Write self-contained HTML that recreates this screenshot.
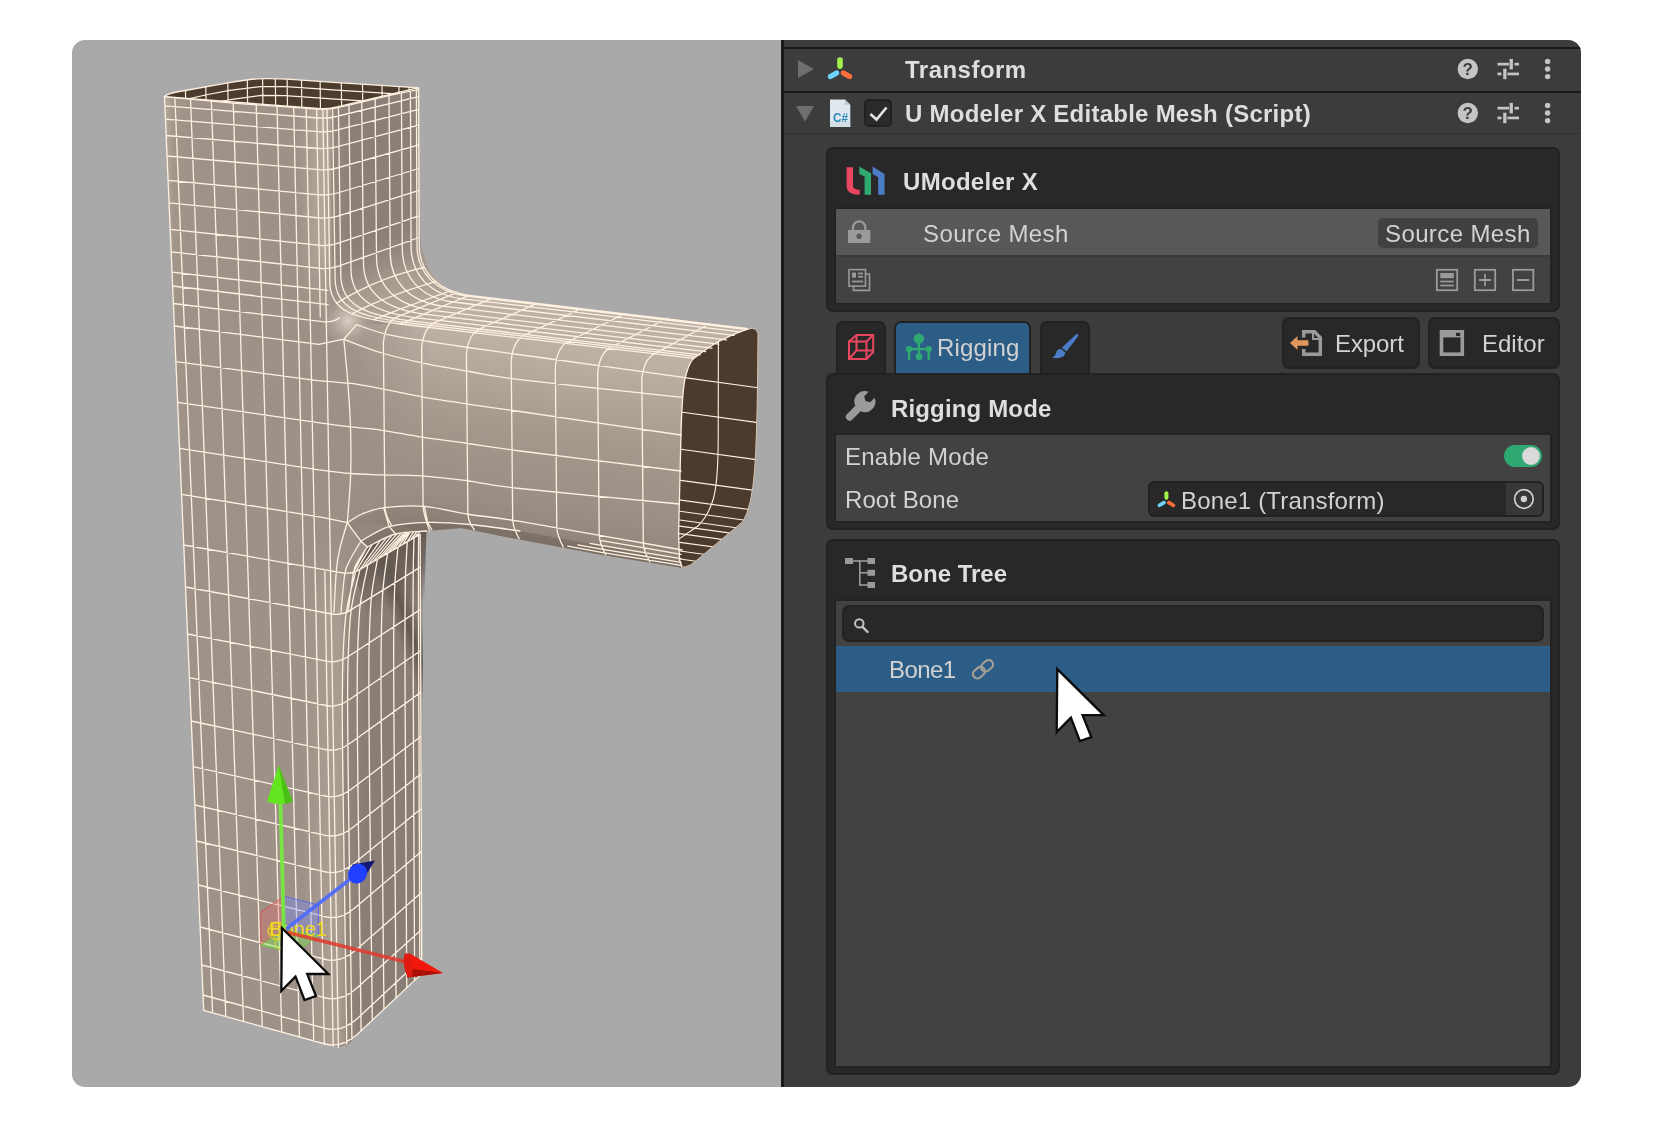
<!DOCTYPE html>
<html><head><meta charset="utf-8"><title>UModeler X Rigging</title>
<style>
*{box-sizing:border-box;margin:0;padding:0}
html,body{width:1653px;height:1127px;background:#fff;overflow:hidden}
body{font-family:"Liberation Sans",sans-serif;position:relative;color:#d2d2d2}
#frame{position:absolute;left:72px;top:40px;width:1509px;height:1047px;border-radius:13px;overflow:hidden;background:#a9a9a9}
#panel{position:absolute;left:709px;top:0;width:800px;height:1047px;background:#3c3c3c;border-left:3px solid #191919}
.abs{position:absolute}
.hline{position:absolute;left:0;width:797px;height:2px;background:#1a1a1a}
.t{position:absolute;white-space:nowrap;will-change:transform;font-size:24px;line-height:28px;color:#d2d2d2}
.b{font-weight:bold;color:#dedede}
.box{position:absolute;background:#282828;border:2px solid #222;border-radius:7px}
.inner{position:absolute;background:#424242}
svg{position:absolute;left:0;top:0;overflow:visible}
</style></head><body>
<div id="frame">
<svg id="vp" width="1509" height="1047" viewBox="72 40 1509 1047">
<defs>
<linearGradient id="gFront" gradientUnits="userSpaceOnUse" x1="165" y1="0" x2="345" y2="0">
<stop offset="0" stop-color="#b5a99e"/><stop offset=".05" stop-color="#a2968b"/><stop offset=".12" stop-color="#9f9389"/><stop offset="1" stop-color="#9d9187"/></linearGradient>
<linearGradient id="gHiU" gradientUnits="userSpaceOnUse" x1="296" y1="0" x2="334" y2="0">
<stop offset="0" stop-color="#b3a69b" stop-opacity="0"/><stop offset=".7" stop-color="#b3a69b"/><stop offset=".9" stop-color="#ab9e93"/><stop offset="1" stop-color="#978b81"/></linearGradient>
<linearGradient id="gHiL" gradientUnits="userSpaceOnUse" x1="300" y1="0" x2="350" y2="0">
<stop offset="0" stop-color="#ada095" stop-opacity="0"/><stop offset=".6" stop-color="#ada095" stop-opacity=".8"/><stop offset=".8" stop-color="#a89b90"/><stop offset="1" stop-color="#94887e"/></linearGradient>
<linearGradient id="gFadeU" gradientUnits="userSpaceOnUse" x1="0" y1="250" x2="0" y2="320">
<stop offset="0" stop-color="#fff"/><stop offset="1" stop-color="#000"/></linearGradient>
<linearGradient id="gFadeL" gradientUnits="userSpaceOnUse" x1="0" y1="540" x2="0" y2="600">
<stop offset="0" stop-color="#000"/><stop offset="1" stop-color="#fff"/></linearGradient>
<mask id="mU" maskUnits="userSpaceOnUse" x="100" y="50" width="400" height="300"><rect x="100" y="50" width="400" height="300" fill="url(#gFadeU)"/></mask>
<mask id="mL" maskUnits="userSpaceOnUse" x="100" y="500" width="400" height="600"><rect x="100" y="500" width="400" height="600" fill="url(#gFadeL)"/></mask>
<linearGradient id="gRight" gradientUnits="userSpaceOnUse" x1="330" y1="0" x2="420" y2="0">
<stop offset="0" stop-color="#958980"/><stop offset=".25" stop-color="#8b8077"/><stop offset=".9" stop-color="#8b8077"/><stop offset="1" stop-color="#93877e"/></linearGradient>
<linearGradient id="gRightLow" gradientUnits="userSpaceOnUse" x1="340" y1="0" x2="425" y2="0">
<stop offset="0" stop-color="#94887e"/><stop offset=".3" stop-color="#897e75"/><stop offset=".9" stop-color="#897e75"/><stop offset="1" stop-color="#93877e"/></linearGradient>
<linearGradient id="gBranch" gradientUnits="userSpaceOnUse" x1="0" y1="262" x2="0" y2="462" gradientTransform="matrix(1 0.155 0 1 0 0)">
<stop offset="0" stop-color="#bdb0a5"/><stop offset=".18" stop-color="#b3a69b"/><stop offset=".45" stop-color="#a4988d"/><stop offset=".8" stop-color="#9b8f85"/><stop offset=".93" stop-color="#93877d"/><stop offset="1" stop-color="#83776d"/></linearGradient>
<linearGradient id="gBand" gradientUnits="userSpaceOnUse" x1="0" y1="290" x2="10" y2="350">
<stop offset="0" stop-color="#b3a69b"/><stop offset="1" stop-color="#bdb0a5"/></linearGradient>
<linearGradient id="gFil" gradientUnits="userSpaceOnUse" x1="380" y1="225" x2="425" y2="320">
<stop offset="0" stop-color="#8b8077" stop-opacity="0"/><stop offset=".5" stop-color="#a69a8f"/><stop offset="1" stop-color="#b8aba0"/></linearGradient>
<radialGradient id="gHi" gradientUnits="userSpaceOnUse" cx="348" cy="321" r="26">
<stop offset="0" stop-color="#d9cec4"/><stop offset=".35" stop-color="#c6baaf" stop-opacity=".8"/><stop offset="1" stop-color="#b8aba0" stop-opacity="0"/></radialGradient>
<linearGradient id="gShade" gradientUnits="userSpaceOnUse" x1="380" y1="528" x2="398" y2="610">
<stop offset="0" stop-color="#5b524b"/><stop offset=".5" stop-color="#665d56" stop-opacity=".8"/><stop offset="1" stop-color="#6a615a" stop-opacity="0"/></linearGradient>
<linearGradient id="gJ" gradientUnits="userSpaceOnUse" x1="332" y1="0" x2="440" y2="0">
<stop offset="0" stop-color="#9d9187"/><stop offset=".2" stop-color="#9d9187" stop-opacity=".9"/><stop offset="1" stop-color="#9d9187" stop-opacity="0"/></linearGradient>
<linearGradient id="gStreak" gradientUnits="userSpaceOnUse" x1="0" y1="0" x2="30" y2="0" gradientTransform="matrix(1 0 0.37 1 162 0)">
<stop offset="0" stop-color="#5f564f" stop-opacity="0"/><stop offset=".5" stop-color="#5f564f" stop-opacity=".95"/><stop offset="1" stop-color="#5f564f" stop-opacity="0"/></linearGradient>
<linearGradient id="gUnder" gradientUnits="userSpaceOnUse" x1="0" y1="0" x2="6" y2="26">
<stop offset="0" stop-color="#9d9187"/><stop offset="1" stop-color="#6e6259"/></linearGradient>
<linearGradient id="gFadeB" gradientUnits="userSpaceOnUse" x1="338" y1="0" x2="430" y2="0">
<stop offset="0" stop-color="#000"/><stop offset=".15" stop-color="#222"/><stop offset="1" stop-color="#fff"/></linearGradient>
<mask id="mB" maskUnits="userSpaceOnUse" x="300" y="250" width="500" height="350"><rect x="300" y="250" width="500" height="350" fill="url(#gFadeB)"/></mask>
<clipPath id="clipBF"><path d="M333 345 L356 345 L440 345 L440 531 L389 525 L347 523.7 L333 523Z"/></clipPath>
<clipPath id="clipTop"><path d="M164.4 96.8 Q166 93.5 185 90.5 L228 82.8 Q250 79 263.4 78.6 Q275 78.4 287 79.2 L341 82.8 L400.6 86.7 L414 87.6 Q418.2 88 418.5 89.6 L392 94.8 L349.8 104.8 Q331 109.5 324.4 109 Q318 109.3 304 108.2 L232.9 103.1 Z"/></clipPath>
<clipPath id="clipBr"><path d="M749.4 328.6 Q756 327.3 758 333.5 L757.6 380 Q756.8 440 754.6 470 Q752 506 743 521.5 L700 557.5 Q688 568.5 682 567 L679.5 560 L678.6 533.6 L681 434 Q682 395 684.8 379.6 Q688 366 692.3 359.7 Q700 353 717 342.3 Q735 333 749.4 328.6Z"/></clipPath>
<clipPath id="clipLow"><path d="M300 500 L370 500 L367.4 546.9 L354 573.5 L359 558 L367.4 546.9 L395.6 534 L426.5 531 L440 531 L440 1100 L300 1100Z"/></clipPath>
</defs>
<path fill="#9d9187" d="M164.5 96.7 L327 109.2 L418.6 87.7 L419.2 245 C419.2 273 439.3 291.4 469.3 295.3 L539.5 305 L626 314.8 L680 319 L711.5 324.9 L749 328.6 L756.7 329.5 Q758.6 331 758.6 336 L758.2 380 Q757.4 440 755.2 470 Q752.6 506.5 743.6 522 L700.5 558 Q688 569.5 681.3 567.7 L596.9 554.1 L500 535.8 L461.7 528 L427 531 L422.4 540 L421.8 973.6 L354 1038.2 Q343 1050.2 332 1046 L203.7 1010.4 Z"/>
<path fill="url(#gFront)" d="M164.5 96.7 L327 109.2 L342 1046.7 L203.7 1010.4Z"/>
<path fill="url(#gHiU)" mask="url(#mU)" d="M296 100 L331 109.2 L337 320 L296 320Z"/>
<path fill="url(#gHiL)" mask="url(#mL)" d="M300 540 L356 540 L345 700 L350 1042.7 L336 1046.7 L300 1040Z"/>
<path fill="url(#gRight)" d="M331 108.2 L418.6 87.7 L419.2 245 C419.2 273 439.3 291.4 469.3 295.3 L469.3 295.3 L400 324 C355 318.1 329.8 312 332.8 282 Z"/>
<path fill="url(#gFil)" d="M332.8 232 L419.2 215 C419.2 273 439.3 291.4 469.3 295.3 L400 324 C355 318.1 329.8 312 332.8 282 Z"/>
<path fill="url(#gBranch)" mask="url(#mB)" d="M333 300 L356 324.4 L400 324 L693.9 358.4 L690.4 359.5 L684 385 L682.8 410.8 L678.3 501.3 L679.8 564.7 L681.3 567.7 L596.9 554.1 L500 535.8 L461.7 528 L427 531 L389 525 L347 523.7 L337 523Z"/>
<path fill="url(#gBand)" d="M400 324 L469.3 295.3 L539.5 305 L626 314.8 L680 319 L711.5 324.9 L749 328.6 L756.7 332.4 L749 332 L693.9 358.4Z"/>
<circle cx="348" cy="321" r="26" fill="url(#gHi)"/>
<path fill="#8c8076" d="M348.2 522.9 L383.9 508.5 L424.4 506.4 L470 514.5 L520 521.4 L520 539.5 L461.7 528 L431.8 529.8 L395.6 534 L367.4 546.9Z" opacity=".5"/>
<path fill="#6f6359" d="M361 541 L389.2 526.6 L427.6 522.4 L470 524.5 L520 531 L600 546 L681 561 L681.3 567.7 L596.9 554.1 L500 535.8 L461.7 528 L431.8 529.8 L395.6 534 L367.4 546.9Z" opacity=".5"/>
<path fill="url(#gRightLow)" d="M352 574 L359 558 L367.4 546.9 L395.6 534 L426.5 531 L422.4 540 L421.8 973.6 L354 1038.2 L346 1046.7 L343 700Z"/>
<path fill="url(#gShade)" d="M354 572 L359 558 L367.4 546.9 L395.6 534 L426.5 531 L423 640 L375 640 Z"/>
<path fill="url(#gStreak)" d="M366 548 L423 531 L423 720 L400 720Z"/>
<path id="topOpen" fill="#4c3c2d" d="M164.4 96.8 Q166 93.5 185 90.5 L228 82.8 Q250 79 263.4 78.6 Q275 78.4 287 79.2 L341 82.8 L400.6 86.7 L414 87.6 Q418.2 88 418.5 89.6 L392 94.8 L349.8 104.8 Q331 109.5 324.4 109 Q318 109.3 304 108.2 L232.9 103.1 Z"/>
<path id="brOpen" fill="#4c3b2c" d="M749.4 328.6 Q756 327.3 758 333.5 L757.6 380 Q756.8 440 754.6 470 Q752 506 743 521.5 L700 557.5 Q688 568.5 682 567 L679.5 560 L678.6 533.6 L681 434 Q682 395 684.8 379.6 Q688 366 692.3 359.7 Q700 353 717 342.3 Q735 333 749.4 328.6Z"/>
<g fill="none" stroke="#fff1e2" stroke-width="1.3" stroke-linecap="round" stroke-linejoin="round">
<path d="M164.5 96.7 L203.7 1010.4 M174.9 97.5 L212.6 1012.9 M190.5 98.7 L225.8 1016.5 M211.3 100.3 L243.5 1021.4 M233.2 102 L262.2 1026.6 M256.2 103.8 L281.7 1032 M277 105.4 L299.4 1036.9 M293.7 106.6 L313.7 1040.9 M306.2 107.6 L324.3 1043.8 M316.6 108.4 L320.3 317.1 M324.8 571.6 L333.2 1046.3 M322.8 108.9 L338.4 1047.7 M164.5 96.7 L318 108.5 Q327 109.2 336 107.1 L418.6 87.7 M164.9 105.9 L318.2 118 Q327.2 118.7 336.2 116.5 L418.6 96.6 M165.5 119.2 L318.4 131.7 Q327.4 132.5 336.4 130.2 L418.7 109.4 M166.2 135.5 L318.6 148.5 Q327.6 149.3 336.6 146.9 L418.7 125.1 M167 156 L319 169.7 Q328 170.5 337 168 L418.8 144.9 M168.1 180.4 L319.4 194.8 Q328.4 195.7 337.4 193 L418.9 168.5 M169.1 202.9 L319.8 218 Q328.8 218.9 337.8 216.1 L419 190.3 M170.2 229.4 L320.2 245.3 Q329.2 246.3 338.2 243.2 L419.1 215.9 M171.2 251.8 L320.6 268.4 Q329.6 269.4 338.6 266.2 L419.1 237.5 M172 272.2 L327.9 290.4 M172.6 286 L328.1 304.7 M173.4 303.5 L322.4 321.7 Q333.4 322.7 339.4 317.7 M174.3 326 L318.8 344.4 L343.8 339.2 M175.9 361.6 L317.4 380.7 L317.4 380.7 C322.9 381.2 339.9 382.1 350.7 383.4 C361.5 384.7 370 386.6 381.9 388.8 C393.8 391.1 408.2 394.4 422.2 396.9 C436.2 399.4 449.7 401.4 466 403.8 C482.3 406.2 484.1 406.3 520 411.5 C555.9 416.7 654.3 431.1 681.2 435 M177.6 402.4 L318.1 422.6 L318.1 422.6 C323.5 423.3 340.1 425.6 350.7 426.9 C361.3 428.2 370 428.6 381.9 430.3 C393.8 432 408.4 435.1 422.2 437.2 C436 439.3 448.6 440.7 464.9 443 C481.2 445.3 484 446.3 520 451 C556 455.7 654.2 467.7 681 471 M179.6 448.4 L318.8 469.8 L318.8 469.8 C323.9 470.4 339.1 472.7 349.6 473.5 C360.1 474.3 370 474.4 381.9 474.8 C393.8 475.2 407.2 474.9 421 475.8 C434.8 476.7 448.4 478.3 464.9 480.4 C481.4 482.5 484.2 484.6 520 488.5 C555.8 492.4 652.9 501.4 679.5 504 M181.6 494.3 L323.6 517.6 L347.3 522.6 M183.7 545 L342.5 572.8 M185.5 587 L332 614 M187.6 634 L327.6 661.3 M189.4 677.6 L326.2 705.5 M191.3 721 L325.7 749.7 M193.2 766.6 L325.5 796.2 M194.9 805 L325.4 835.3 M196.4 841 L325.3 871.9 M198.3 885 L325.2 916.7 M200.1 927 L325.2 959.4 M201.8 965 L325.1 997.9 M203 995 L325.1 1028.4 M203.7 1010.4 L325 1044 M343.8 339.2 C344.4 345.3 346.2 362.2 347.3 376 C348.4 389.8 349.7 405.8 350.3 422 C350.9 438.2 351.2 456.2 350.7 473 C350.2 489.8 347.9 514.3 347.3 522.6 M343.8 339.2 L356.5 324.6 M343.8 339.2 C350.1 341.5 368.4 349 381.9 353 C395.3 357 409.9 360.3 424.5 363.4 C439.1 366.5 453.6 368.8 469.5 371.5 C485.4 374.2 484.5 375.3 520 379.6 C555.5 383.9 655.3 394.4 682.4 397.3 M356.5 324.6 C361.7 326.3 375.5 331.8 387.6 334.6 C399.7 337.4 414.4 339.2 429 341.5 C443.6 343.8 456.5 345.8 475 348.5 C493.5 351.2 505 352.6 540 357.5 C575 362.4 660.8 374.2 685 377.6 M347.3 522.6 C349.8 521.2 355.9 516.5 362 514 C368.1 511.5 373.8 508.9 384.2 507.6 C394.6 506.3 410.3 505.2 424.5 506.4 C438.7 507.5 453.6 512 469.5 514.5 C485.4 517 484.6 515.5 520 521.4 C555.5 527.3 655.2 545.2 682.2 550 M605 541.1 L600 540.3 L640 547.2 L681 554.3 M590 543.3 L600 545.1 L640 551.8 L681 558.7 M578 544.9 L600 548.9 L640 555.5 L681 562.3 M567.8 546.2 L600 552.1 L640 558.6 L681 565.3 M347.3 522.6 C346.1 526.8 341.8 540.3 340 548 C338.2 555.7 337.5 558.3 336.5 569 C335.5 579.7 334.4 604.8 334 612 M347.3 522.6 C349.6 525.7 357.6 537 361 541 C364.4 545 366.3 545.9 367.4 546.9 M361 541 C365.7 538.6 378.1 529.7 389.2 526.6 C400.3 523.5 414.1 522.8 427.6 522.4 C441.1 522 454.6 523.1 470 524.5 C485.4 525.9 511.7 529.9 520 531 M367.4 546.9 C372.1 544.8 385.8 536.6 395.6 534 C405.5 531.4 421.4 531.5 426.5 531 M383.9 508.5 L389.2 526.6 L395.6 534 M424.4 506.4 L427.6 522.4 L431.8 529.8 M327 109.2 L329.8 282 C329.8 312 355 318.1 400 324 L693.9 358.4 M332.5 107.9 L335.1 278.5 C335.1 308.4 360 316.6 404.1 322.3 L697 356.6 M338.4 106.5 L340.8 275 C340.8 304.8 365.1 315 408.3 320.6 L700.2 354.8 M348.9 104.1 L351 269.2 C351 298.7 374 312.2 415.4 317.6 L705.6 351.7 M361.7 101 L363.5 262.8 C363.5 292 384.5 309 423.8 314.1 L712 348.1 M375.1 97.9 L376.5 257.1 C376.5 286 395.6 305.6 432.7 310.4 L718.8 344.2 M389 94.6 L390.2 252.1 C390.2 280.8 408.1 301.7 442.9 306.2 L726.5 339.8 M401.4 91.7 L402.3 248.6 C402.3 277 420.3 297.7 453.1 302 L734.2 335.4 M410.4 89.6 L411.1 246.5 C411.1 274.7 429.9 294.5 461.3 298.6 L740.4 331.8 M416.4 88.2 L417 245.4 C417 273.4 436.7 292.3 467.1 296.2 L744.9 329.3 M418.6 87.7 L419.2 245 C419.2 273 439.3 291.4 469.3 295.3 L746.5 328.4 M336.4 303.2 L341.7 300.1 L347.2 296.9 L357.1 291.6 L369.1 285.8 L381.7 280.5 L395 275.6 L407 271.8 L416 269.4 L422.1 268 L424.3 267.5 M351.8 313.8 L356.7 311.3 L361.9 308.9 L371.1 304.7 L382.1 300 L393.7 295.5 L406.2 290.9 L418.1 287 L427.1 284.2 L433.4 282.4 L435.7 281.7 M373.2 319.8 L377.8 318 L382.6 316.1 L390.8 312.8 L400.5 309 L410.9 305.2 L422.4 301 L433.6 296.9 L442.5 293.7 L448.7 291.5 L451 290.7 M400 324 L404.1 322.3 L408.3 320.6 L415.4 317.6 L423.8 314.1 L432.7 310.4 L442.9 306.2 L453.1 302 L461.3 298.6 L467.1 296.2 L469.3 295.3 M391.4 525 Q385.4 515.6 384.9 507.6 L383.4 342.9 Q385.4 321.9 397.4 316.9 L458 292.2 M429.6 530.8 Q423.6 514.5 423.1 506.5 L421.6 348.2 Q423.6 327.2 435.6 322.2 L491.7 298.4 M474.4 529.8 Q468.4 522.1 467.9 514.1 L466.4 354.5 Q468.4 333.5 480.4 328.5 L534.7 304.3 M519.2 538.7 Q513.2 528.3 512.7 520.3 L511.2 360.8 Q513.2 339.8 525.2 334.8 L579.2 309.5 M563.3 547 Q557.3 535.8 556.8 527.8 L555.3 367 Q557.3 346 569.3 341 L623.1 314.5 M605.7 554.9 Q599.7 543.3 599.2 535.3 L597.7 372.9 Q599.7 351.9 611.7 346.9 L667.5 318 M649.8 562 Q643.8 551.1 643.3 543.1 L641.8 379.1 Q643.8 358.1 655.8 353.1 L708.5 324.3"/>
<g clip-path="url(#clipLow)"><path d="M342.5 572.8 Q351.5 574.4 360.5 569.1 L420.2 534.1 M332 614 Q341.5 615.7 350.9 609.9 L420.3 567.1 M327.6 661.3 Q337.9 663.3 348.2 656.5 L420.5 609.4 M326.2 705.5 Q337.3 707.8 348.4 700.2 L420.6 650.7 M325.7 749.7 Q337.5 752.2 349.4 743.7 L420.8 692.4 M325.5 796.2 Q338.1 799 350.8 789.4 L420.9 736.5 M325.4 835.3 Q338.7 838.4 352.1 827.9 L421.1 773.8 M325.3 871.9 Q339.3 875.3 353.3 863.9 L421.2 808.8 M325.2 916.7 Q340 920.4 354.8 907.9 L421.4 851.6 M325.2 959.4 Q340.7 963.4 356.2 949.7 L421.5 892.4 M325.1 997.9 Q341.3 1002.3 357.5 987.6 L421.6 929.4 M325.1 1028.4 Q341.8 1033 358.5 1017.4 L421.7 958.6 M325 1044 Q342 1048.7 359.1 1032.7 L421.8 973.6 M355.6 572 C354 578.8 348.3 598.1 346.2 612.8 C344.1 627.5 343.5 644.8 342.9 660 C342.2 675.3 342.4 689.6 342.3 704.4 C342.2 719.1 342.4 733.5 342.5 748.7 C342.7 763.8 342.9 780.9 343.1 795.3 C343.3 809.6 343.5 821.8 343.7 834.5 C343.8 847.2 344 857.7 344.2 871.3 C344.4 884.9 344.7 901.6 344.9 916.2 C345.1 930.9 345.3 945.5 345.5 959.1 C345.7 972.7 345.9 986.3 346.1 997.9 C346.3 1009.5 346.5 1020.8 346.6 1028.5 C346.7 1036.2 346.8 1041.6 346.8 1044.2 M360 569.4 C358.5 576.1 353.2 595.2 351.2 609.7 C349.3 624.2 348.8 641.4 348.2 656.6 C347.6 671.8 347.7 686 347.6 700.7 C347.6 715.4 347.7 729.7 347.9 744.8 C348 759.9 348.2 777 348.4 791.3 C348.6 805.5 348.7 817.7 348.9 830.4 C349.1 843 349.2 853.5 349.4 867 C349.6 880.6 349.9 897.2 350.1 911.8 C350.3 926.4 350.5 941 350.7 954.6 C350.9 968.1 351.1 981.7 351.3 993.2 C351.4 1004.8 351.6 1016 351.7 1023.7 C351.8 1031.4 351.9 1036.8 351.9 1039.4 M367.9 564.8 C366.6 571.3 362 589.9 360.3 604.1 C358.6 618.4 358.2 635.4 357.7 650.4 C357.1 665.4 357.2 679.5 357.2 694.1 C357.2 708.7 357.3 723 357.4 737.9 C357.6 752.9 357.8 769.9 357.9 784.1 C358.1 798.2 358.2 810.4 358.4 822.9 C358.6 835.5 358.7 845.9 358.9 859.4 C359 872.9 359.3 889.4 359.4 903.9 C359.6 918.4 359.8 932.9 360 946.4 C360.2 959.9 360.4 973.4 360.5 984.9 C360.7 996.3 360.8 1007.5 360.9 1015.2 C361 1022.8 361.1 1028.2 361.1 1030.8 M377.5 559.1 C376.5 565.5 372.7 583.4 371.4 597.3 C370 611.3 369.6 628.1 369.2 642.9 C368.8 657.7 368.9 671.7 368.9 686.1 C368.9 700.6 369 714.7 369.1 729.6 C369.2 744.4 369.4 761.3 369.5 775.3 C369.7 789.4 369.8 801.4 369.9 813.9 C370.1 826.4 370.2 836.7 370.3 850.1 C370.5 863.5 370.7 879.9 370.8 894.3 C371 908.7 371.2 923.1 371.3 936.5 C371.5 949.9 371.6 963.3 371.8 974.6 C371.9 986 372 997.2 372.1 1004.8 C372.2 1012.4 372.2 1017.7 372.3 1020.2 M387.6 553.3 C386.8 559.4 383.9 576.6 382.9 590.2 C381.8 603.8 381.6 620.4 381.3 635 C381 649.6 381.1 663.5 381 677.8 C381 692.1 381.2 706.1 381.2 720.8 C381.3 735.6 381.5 752.3 381.6 766.2 C381.7 780.2 381.8 792.1 382 804.5 C382.1 816.8 382.2 827.1 382.3 840.4 C382.4 853.7 382.6 869.9 382.7 884.2 C382.8 898.5 383 912.8 383.1 926.1 C383.2 939.4 383.4 952.7 383.5 964 C383.6 975.3 383.7 986.4 383.8 993.9 C383.8 1001.5 383.9 1006.7 383.9 1009.3 M398 547.1 C397.5 553.1 395.6 569.6 394.9 582.8 C394.2 596.1 394 612.4 393.8 626.8 C393.6 641.2 393.7 655 393.7 669.1 C393.7 683.3 393.8 697.1 393.9 711.7 C394 726.3 394.1 742.9 394.2 756.7 C394.3 770.5 394.4 782.4 394.5 794.7 C394.6 806.9 394.6 817.1 394.7 830.3 C394.8 843.4 395 859.6 395.1 873.8 C395.2 888 395.3 902.1 395.4 915.3 C395.5 928.5 395.6 941.7 395.7 952.9 C395.8 964.1 395.9 975.1 395.9 982.6 C396 990.1 396 995.3 396 997.9 M407.3 541.7 C407 547.5 405.9 563.3 405.5 576.3 C405.1 589.2 405.1 605.4 405 619.6 C404.9 633.7 404.9 647.4 405 661.4 C405 675.4 405.1 689.2 405.1 703.7 C405.2 718.1 405.3 734.6 405.4 748.3 C405.5 762 405.5 773.8 405.6 785.9 C405.7 798.1 405.7 808.2 405.8 821.3 C405.9 834.4 406 850.4 406.1 864.5 C406.1 878.6 406.2 892.7 406.3 905.8 C406.4 918.9 406.5 932 406.5 943.1 C406.6 954.2 406.7 965.1 406.7 972.6 C406.8 980 406.8 985.2 406.8 987.7 M414 537.8 C413.9 543.4 413.4 558.8 413.2 571.5 C413.1 584.3 413.1 600.2 413.1 614.3 C413 628.3 413.1 641.9 413.1 655.8 C413.2 669.7 413.2 683.4 413.3 697.8 C413.4 712.2 413.4 728.5 413.5 742.2 C413.6 755.8 413.6 767.5 413.7 779.6 C413.7 791.7 413.8 801.7 413.8 814.8 C413.9 827.8 414 843.7 414 857.8 C414.1 871.8 414.2 885.8 414.2 898.8 C414.3 911.8 414.4 924.9 414.4 935.9 C414.5 947 414.5 957.9 414.6 965.3 C414.6 972.7 414.6 977.8 414.6 980.3 M418.6 535.1 C418.5 540.6 418.4 555.7 418.4 568.3 C418.4 580.9 418.5 596.8 418.5 610.7 C418.5 624.7 418.6 638.2 418.6 652 C418.7 665.9 418.7 679.5 418.8 693.8 C418.8 708.2 418.9 724.5 419 738 C419 751.6 419.1 763.3 419.1 775.4 C419.2 787.4 419.2 797.4 419.2 810.4 C419.3 823.4 419.4 839.3 419.4 853.2 C419.5 867.2 419.5 881.1 419.6 894.1 C419.6 907.1 419.7 920.1 419.7 931.1 C419.8 942.2 419.8 953 419.8 960.4 C419.9 967.8 419.9 972.9 419.9 975.4 M420.2 534.1 C420.2 539.6 420.3 554.6 420.3 567.1 C420.4 579.7 420.4 595.5 420.5 609.4 C420.5 623.4 420.6 636.8 420.6 650.7 C420.7 664.5 420.7 678.1 420.8 692.4 C420.8 706.7 420.9 723 420.9 736.5 C421 750.1 421 761.8 421.1 773.8 C421.1 785.9 421.2 795.8 421.2 808.8 C421.3 821.7 421.3 837.6 421.4 851.6 C421.4 865.5 421.5 879.4 421.5 892.4 C421.6 905.4 421.6 918.4 421.6 929.4 C421.7 940.4 421.7 951.2 421.7 958.6 C421.8 966 421.8 971.1 421.8 973.6 M352.8 573.6 L366.7 547.8 M355.6 572 L372.1 544.7 M360 569.4 L380 541.1 M363.8 567.1 L386.1 538.4 M367.9 564.8 L391.6 535.9 M372.8 561.9 L396.9 533.9 M377.5 559.1 L400.8 533.5 M382.4 556.3 L403.7 533.2 M387.6 553.3 L405.9 533 M392.7 550.2 L407.4 532.9 M398 547.1 L408.7 532.7 M402.7 544.4 L409.9 532.6 M407.3 541.7 L413.3 532.3 M410.6 539.8 L416.6 532 M414 537.8 L420 531.6 M361 541 C359.2 544.2 352.7 554.5 350 560 C347.3 565.5 346.3 565.3 344.8 574 C343.3 582.7 341.6 605.7 341 612 M367.4 546.9 C365.7 549.6 359.4 558.4 357 563 C354.6 567.6 354.7 566.1 353.2 574.3 C351.7 582.5 348.9 605.7 348 612"/></g>
</g>

<g clip-path="url(#clipTop)" fill="none" stroke="#fff1e2" stroke-width="1.2">
<path d="M185.5 90.6 L186 131.6 M205.8 86 L206.3 127 M227.8 81.8 L228.3 122.8 M247.3 79.7 L247.8 120.7 M262.6 78 L263.1 119 M275.3 78.1 L275.8 119.1 M287.1 78.2 L287.6 119.2 M301.5 79.2 L302 120.2 M320.1 80.4 L320.6 121.4 M341.3 81.8 L341.8 122.8 M362.5 83.2 L363 124.2 M382 84.5 L382.5 125.5 M398.9 85.6 L399.4 126.6 M409.1 86.3 L409.6 127.3 M166.2 103.8 L207.7 94.5 L229.7 90.3 L262.5 86.4 L286.2 86.7 L340.4 90.3 L399.7 94.2 L415.8 95.4 M168.4 112.8 L209.9 103.5 L231.9 99.3 L261.3 95.4 L285 95.7 L339.2 99.3 L398.5 103.2 L414.6 104.4"/></g>
<path d="M164.4 96.8 Q166 93.5 185 90.5 L228 82.8 Q250 79 263.4 78.6 Q275 78.4 287 79.2 L341 82.8 L400.6 86.7 L414 87.6 Q418.2 88 418.5 89.6 L392 94.8 L349.8 104.8 Q331 109.5 324.4 109 Q318 109.3 304 108.2 L232.9 103.1 Z" fill="none" stroke="#fff1e2" stroke-width="1.3"/>
<g clip-path="url(#clipBr)" fill="none" stroke="#fff1e2" stroke-width="1.1">
<path d="M718.4 335 L718.2 440 Q718 484 713 500 Q708 516 698 526 L676 541 M676 376.5 L760 388 M676 411.4 L760 422.9 M676 448.6 L760 460.1 M676 479.7 L760 491.2 M676 499.5 L760 511 M676 510.7 L760 522.2 M676 519.5 L760 531 M676 525.6 L760 537.1 M676 533.1 L760 544.6 M676 541.8 L760 553.3 M676 550.5 L760 562 M676 558.5 L760 570"/></g>
<path d="M749.4 328.6 Q735 333 717 342.3 Q700 353 692.3 359.7 Q688 366 684.8 379.6 Q682 395 681 434 L678.6 533.6 L679.5 560 L682 567" fill="none" stroke="#fff1e2" stroke-width="1.3"/>
<path d="M749.4 328.6 Q756 327.3 758 333.5 L757.6 380 Q756.8 440 754.6 470 Q752 506 743 521.5 L700 557.5 Q688 568.5 682 567" fill="none" stroke="#e6d8c8" stroke-width="1" opacity=".85"/>
<g>
<path d="M260.8 912 L284 896.4 L318.4 905 L318.4 935 L296 953 L260.8 945Z" fill="#ffffff" fill-opacity=".10"/>
<path d="M260.8 912 L284 896.4 L284 930 L260.8 945Z" fill="#e04040" fill-opacity=".28" stroke="#e04040" stroke-opacity=".7" stroke-width="1"/>
<path d="M284 896.4 L318.4 905 L318.4 935 L284 930Z" fill="#5060ff" fill-opacity=".28" stroke="#4858ff" stroke-opacity=".7" stroke-width="1"/>
<path d="M260.8 945 L284 930 L318.4 935 L296 953Z" fill="#60e030" fill-opacity=".35" stroke="#60e030" stroke-opacity=".7" stroke-width="1"/>
<g fill="none" stroke="#f0d820" stroke-width="1" opacity=".85"><circle cx="277" cy="931" r="9"/><ellipse cx="277" cy="931" rx="9" ry="4.5"/><ellipse cx="277" cy="931" rx="4.5" ry="9"/><circle cx="281" cy="943" r="6"/></g>
<text x="269" y="936" font-family="Liberation Sans" font-size="21" fill="#f0d820" textLength="58" lengthAdjust="spacingAndGlyphs">Bone1</text>
<path d="M286 932 L408 962.5" stroke="#e23a2c" stroke-width="3.6" stroke-opacity=".85"/>
<path d="M286 929 L351 878.5" stroke="#4a68ff" stroke-width="3.6" stroke-opacity=".9"/>
<path d="M283.8 928 L280.5 803" stroke="#74ee3c" stroke-width="3.8" stroke-opacity=".9"/>
<path d="M278.7 765.5 L267 801.5 Q279.8 806.5 292.8 801.5Z" fill="#62e61f"/>
<path d="M278.7 765.5 L285 803.8 Q289.5 803.3 292.8 801.5Z" fill="#4dbe18"/>
<path d="M375 860.5 L352.5 864.5 Q349 872 362 881.5Z" fill="#121a74"/>
<ellipse cx="357.6" cy="873.6" rx="9.2" ry="10.2" transform="rotate(35 357.6 873.6)" fill="#2040ff"/>
<path d="M443 973 L409 953 Q403 964 407.5 977.5Z" fill="#f2190c"/>
<path d="M443 973 L420 959.5 L409 953 Q404.5 960 405 966Z" fill="#ff3a22" fill-opacity=".0"/>
<path d="M443 973 L407.5 977.5 Q405.5 972 405.8 968Z" fill="#a81008"/>
<ellipse cx="408.2" cy="965.3" rx="4.2" ry="12.3" transform="rotate(-10 408.2 965.3)" fill="#e01a10"/>
</g>
</svg>
<div id="panel">
<div class="hline" style="top:7px"></div>
<div class="hline" style="top:51px"></div>
<div class="abs" style="left:0px;top:93px;width:797px;height:1px;background:#303030;"></div>
<div class="t b" style="left:121px;top:15.5px;letter-spacing:.48px">Transform</div>
<div class="t b" style="left:121px;top:59.5px;letter-spacing:.25px">U Modeler X Editable Mesh (Script)</div>
<div class="box" style="left:42px;top:107px;width:734px;height:165px;"></div>
<div class="t b" style="left:119px;top:128.3px;letter-spacing:.3px">UModeler X</div>
<div class="abs" style="left:50px;top:167px;width:718px;height:98px;background:#232323;"></div>
<div class="abs" style="left:52px;top:169px;width:714px;height:46px;background:#585858;"></div>
<div class="abs" style="left:52px;top:215px;width:714px;height:2px;background:#3b3b3b;"></div>
<div class="abs" style="left:52px;top:217px;width:714px;height:46px;background:#424242;"></div>
<div class="t " style="left:139px;top:180.2px;letter-spacing:.39px">Source Mesh</div>
<div class="abs" style="left:594px;top:178px;width:160px;height:30px;background:#414141;border-radius:5px"></div>
<div class="t " style="left:601.3px;top:179.8px;letter-spacing:.39px">Source Mesh</div>
<div class="box" style="left:52px;top:281px;width:50px;height:55px;border-bottom:none;border-radius:7px 7px 0 0"></div>
<div class="box" style="left:110px;top:281px;width:137px;height:55px;border-bottom:none;border-radius:7px 7px 0 0;background:#2c5d87"></div>
<div class="box" style="left:256px;top:281px;width:50px;height:55px;border-bottom:none;border-radius:7px 7px 0 0"></div>
<div class="t " style="left:153.4px;top:293.9px;letter-spacing:.16px">Rigging</div>
<div class="box" style="left:498px;top:277px;width:138px;height:52px;"></div>
<div class="box" style="left:644px;top:277px;width:132px;height:52px;"></div>
<div class="t " style="left:551.3px;top:289.9px;letter-spacing:-.1px">Export</div>
<div class="t " style="left:697.6px;top:289.9px;">Editor</div>
<div class="box" style="left:42px;top:333px;width:734px;height:157px;"></div>
<div class="t b" style="left:106.8px;top:354.5px;letter-spacing:.15px">Rigging Mode</div>
<div class="abs" style="left:50px;top:392.7px;width:718px;height:90.5px;background:#232323;"></div>
<div class="abs" style="left:52px;top:394.7px;width:714px;height:86.5px;background:#424242;"></div>
<div class="t " style="left:61.1px;top:403.3px;letter-spacing:.24px">Enable Mode</div>
<div class="t " style="left:61.1px;top:446px;letter-spacing:.07px">Root Bone</div>
<div class="abs" style="left:720px;top:405px;width:38px;height:22px;background:#2fa871;border-radius:11px"></div>
<div class="abs" style="left:738px;top:407px;width:18px;height:18px;background:#d9d9d9;border-radius:9px"></div>
<div class="abs" style="left:364px;top:441px;width:396px;height:36px;background:#282828;border:2px solid #212121;border-radius:6px;overflow:hidden"></div>
<div class="abs" style="left:722px;top:443px;width:36px;height:32px;background:#373737;border-radius:0 4px 4px 0"></div>
<div class="t " style="left:397.3px;top:446.8px;letter-spacing:.18px">Bone1 (Transform)</div>
<div class="box" style="left:42px;top:499px;width:734px;height:536px;"></div>
<div class="t b" style="left:106.8px;top:519.6px;">Bone Tree</div>
<div class="abs" style="left:50px;top:559px;width:718px;height:469px;background:#232323;"></div>
<div class="abs" style="left:52px;top:561px;width:714px;height:465px;background:#424242;"></div>
<div class="abs" style="left:58px;top:565.3px;width:702px;height:36.4px;background:#282828;border:2px solid #222;border-radius:7px"></div>
<div class="abs" style="left:52px;top:606px;width:714px;height:45.7px;background:#2c5d87;"></div>
<div class="t " style="left:105.1px;top:616.1px;letter-spacing:-.6px">Bone1</div>
<svg width="797" height="1047" viewBox="784 40 797 1047">
<path d="M798 60 L814 69 L798 78Z" fill="#6e6e6e"/>
<path d="M796 106 L814 106 L805 121.5Z" fill="#6e6e6e"/>
<g transform="translate(840 68.6) scale(1)" stroke-linecap="round" stroke-width="5.2" fill="none"><path d="M0 -8.6 L0 -2.5" stroke="#a4f04c" stroke-width="5.6"/><path d="M-9.6 8 L-3.4 4.3" stroke="#6fd3ff"/><path d="M9.6 8 L3.4 4.3" stroke="#ff6d39"/></g>
<g><path d="M830 99.5 L845 99.5 L850.3 104.8 L850.3 127 L830 127Z" fill="#dfe8ee"/><path d="M845 99.5 L850.3 104.8 L845 104.8Z" fill="#b9c7d0"/><path d="M830 121 L850.3 121 L850.3 127 L830 127Z" fill="#cbd8e0" opacity=".6"/><text x="833" y="121.5" font-family="Liberation Sans" font-size="13" font-weight="bold" fill="#2e8bb9" textLength="15" lengthAdjust="spacingAndGlyphs">C#</text></g>
<rect x="865" y="100" width="26" height="26" rx="4" fill="#2a2a2a" stroke="#212121" stroke-width="2"/>
<path d="M870.5 114 L876.5 119.5 L886.5 107.5" fill="none" stroke="#e4e4e4" stroke-width="2.6"/>
<circle cx="1467.8" cy="69" r="10.2" fill="#c4c4c4"/>
<text x="1467.8" y="75.1" text-anchor="middle" font-family="Liberation Sans" font-weight="bold" font-size="17" fill="#3c3c3c">?</text>
<g fill="#c4c4c4"><rect x="1497.5" y="62.8" width="11.5" height="2.7"/><rect x="1514.5" y="62.8" width="4.5" height="2.7"/><rect x="1509.6" y="58.9" width="3.3" height="10.5"/><rect x="1497.5" y="72.6" width="4" height="2.7"/><rect x="1507.4" y="72.6" width="11.6" height="2.7"/><rect x="1503.2" y="68.7" width="3.3" height="10.5"/></g>
<circle cx="1547.6" cy="61.4" r="2.7" fill="#c4c4c4"/>
<circle cx="1547.6" cy="69" r="2.7" fill="#c4c4c4"/>
<circle cx="1547.6" cy="76.6" r="2.7" fill="#c4c4c4"/>
<circle cx="1467.8" cy="113" r="10.2" fill="#c4c4c4"/>
<text x="1467.8" y="119.1" text-anchor="middle" font-family="Liberation Sans" font-weight="bold" font-size="17" fill="#3c3c3c">?</text>
<g fill="#c4c4c4"><rect x="1497.5" y="106.8" width="11.5" height="2.7"/><rect x="1514.5" y="106.8" width="4.5" height="2.7"/><rect x="1509.6" y="102.9" width="3.3" height="10.5"/><rect x="1497.5" y="116.6" width="4" height="2.7"/><rect x="1507.4" y="116.6" width="11.6" height="2.7"/><rect x="1503.2" y="112.7" width="3.3" height="10.5"/></g>
<circle cx="1547.6" cy="105.4" r="2.7" fill="#c4c4c4"/>
<circle cx="1547.6" cy="113" r="2.7" fill="#c4c4c4"/>
<circle cx="1547.6" cy="120.6" r="2.7" fill="#c4c4c4"/>
<g><path d="M846.6 167.3 L853 167.3 L853 186 Q853 189.5 859.7 189.8 L859.7 194.8 Q846.6 194.5 846.6 186Z" fill="#e8475f"/><path d="M859.3 166.6 L871 173.3 L871 194.8 L864.6 194.8 L864.6 176.6 L859.3 174Z" fill="#2fa871"/><path d="M872.6 166.6 L884.5 174 L884.5 194.8 L878.2 194.8 L878.2 177.3 L872.6 174Z" fill="#4d7cc7"/></g>
<g><rect x="848" y="230" width="22.3" height="13" fill="#9a9a9a"/><path d="M853 230 L853 227.5 A6.1 6.1 0 0 1 865.3 227.5 L865.3 230" fill="none" stroke="#9a9a9a" stroke-width="2.2"/><circle cx="859.1" cy="236.3" r="2.7" fill="#585858"/></g>
<g fill="none" stroke="#9a9a9a" stroke-width="1.6"><rect x="849" y="269.6" width="16.5" height="16.5"/><path d="M853.5 286.1 L853.5 290.4 L869.5 290.4 L869.5 274 L865.5 274"/></g><g fill="#9a9a9a"><rect x="852" y="272.6" width="4" height="5"/><rect x="858" y="272.6" width="5" height="1.8"/><rect x="858" y="275.8" width="5" height="1.8"/><rect x="852" y="280.6" width="11" height="1.8"/></g>
<g fill="none" stroke="#9a9a9a" stroke-width="1.8"><rect x="1436.8" y="269.8" width="20.4" height="20.4"/><rect x="1474.8" y="269.8" width="20.4" height="20.4"/><rect x="1512.9" y="269.8" width="20.4" height="20.4"/><path d="M1485 274 L1485 286 M1479 280 L1491 280 M1517 280 L1529.2 280"/></g><g fill="#9a9a9a"><rect x="1440.3" y="273" width="13.5" height="5.2"/><rect x="1440.3" y="280.6" width="13.5" height="1.8"/><rect x="1440.3" y="284.6" width="13.5" height="1.8"/></g>
<g fill="none" stroke="#e8475f" stroke-width="2"><rect x="849" y="341.5" width="17.5" height="17.5"/><path d="M849 341.5 L856.5 335 L873.2 335 L873.2 352 L866.5 359 M866.5 341.5 L873.2 335 M856.5 335 L856.5 350.5 L873.2 350.5 M856.5 350.5 L849 359" /></g>
<g fill="#2fa871"><circle cx="918.9" cy="338.6" r="5.2"/><circle cx="909.1" cy="349.1" r="3.2"/><circle cx="928.7" cy="349.1" r="3.2"/><circle cx="919" cy="356.7" r="3.4"/><path d="M918.9 340 L918.9 356 M909.1 349.1 L928.7 349.1 M909.1 349 L909.1 360.1 M928.7 349 L928.7 360.1" fill="none" stroke="#2fa871" stroke-width="2.4"/></g>
<g fill="#4d7cc7"><path d="M1077.5 334 Q1079 334.5 1078 336.5 L1066.5 351.5 L1061.8 347.8 L1075.5 334.8 Q1076.5 333.8 1077.5 334Z"/><path d="M1060.5 348.8 L1065.3 352.6 Q1065 357 1060 357.8 Q1055.5 358.6 1052 357.6 Q1055.5 356 1056 353 Q1056.8 349.2 1060.5 348.8Z"/></g>
<g><path d="M1303.7 337.5 L1303.7 331.8 L1314.5 331.8 L1320.3 337.6 L1320.3 354.2 L1303.7 354.2 L1303.7 349" fill="none" stroke="#9a9a9a" stroke-width="3.5"/><path d="M1313 331 L1313 339 L1321 339" fill="none" stroke="#9a9a9a" stroke-width="2"/><path d="M1290 343 L1297.5 336 L1297.5 340.2 L1308.4 340.2 L1308.4 345.8 L1297.5 345.8 L1297.5 350Z" fill="#e0965a"/></g>
<g><rect x="1441.5" y="331.8" width="20.8" height="22.4" fill="none" stroke="#9a9a9a" stroke-width="3.6"/><rect x="1440" y="330" width="24" height="7.4" fill="#9a9a9a"/><rect x="1456" y="332.8" width="4.2" height="3.2" fill="#282828"/></g>
<circle cx="1523.9" cy="499" r="9.3" fill="none" stroke="#d0d0d0" stroke-width="1.7"/><circle cx="1523.9" cy="499" r="3.2" fill="#d0d0d0"/>
<g transform="translate(1166.4 499.5) scale(0.72)" stroke-linecap="round" stroke-width="5.2" fill="none"><path d="M0 -8.6 L0 -2.5" stroke="#a4f04c" stroke-width="5.6"/><path d="M-9.6 8 L-3.4 4.3" stroke="#6fd3ff"/><path d="M9.6 8 L3.4 4.3" stroke="#ff6d39"/></g>
<g transform="translate(864.9 401.6) rotate(45)"><path d="M-3.8 9.8 L-3.8 21.6 A3.8 3.8 0 0 0 3.8 21.6 L3.8 9.8 A10.5 10.5 0 0 0 4.2 -9.6 L4.2 -3.2 L0 -0.8 L-4.2 -3.2 L-4.2 -9.6 A10.5 10.5 0 0 0 -3.8 9.8Z" fill="#9a9a9a"/></g>
<g fill="#9a9a9a"><rect x="845" y="558" width="8" height="6"/><rect x="867.5" y="558" width="7.5" height="6"/><rect x="867.5" y="569.8" width="7.5" height="6"/><rect x="867.5" y="582" width="7.5" height="6"/><rect x="853" y="560.2" width="15" height="1.6"/><rect x="859" y="560.2" width="1.6" height="25.6"/><rect x="859" y="572" width="9" height="1.6"/><rect x="859" y="584.2" width="9" height="1.6"/></g>
<g fill="none" stroke="#c4c4c4"><circle cx="859.3" cy="623.4" r="4.2" stroke-width="2"/><path d="M862.5 626.8 L867.6 632" stroke-width="2.4" stroke-linecap="round"/></g>
<g transform="translate(983 669.2) rotate(-40)" fill="none" stroke="#a29e97" stroke-width="2.1"><rect x="-11.8" y="-4.4" width="13" height="8.8" rx="4.4"/><rect x="-1.2" y="-4.4" width="13" height="8.8" rx="4.4"/></g>
</svg>
</div>
</div>
<svg width="1653" height="1127" viewBox="0 0 1653 1127" style="pointer-events:none">
<g transform="translate(281 925.3)"><path d="M0.9 2.7 L0.3 65.7 L14.5 51.3 L23.5 74.7 L35 70.8 L26.2 48.7 L47.4 48.7 Z" fill="#fff" stroke="#0c0c0c" stroke-width="2.3" stroke-linejoin="miter" stroke-miterlimit="10"/></g>
<g transform="translate(1056.4 666.4)"><path d="M0.9 2.7 L0.3 65.7 L14.5 51.3 L23.5 74.7 L35 70.8 L26.2 48.7 L47.4 48.7 Z" fill="#fff" stroke="#0c0c0c" stroke-width="2.3" stroke-linejoin="miter" stroke-miterlimit="10"/></g>
</svg>
</body></html>
